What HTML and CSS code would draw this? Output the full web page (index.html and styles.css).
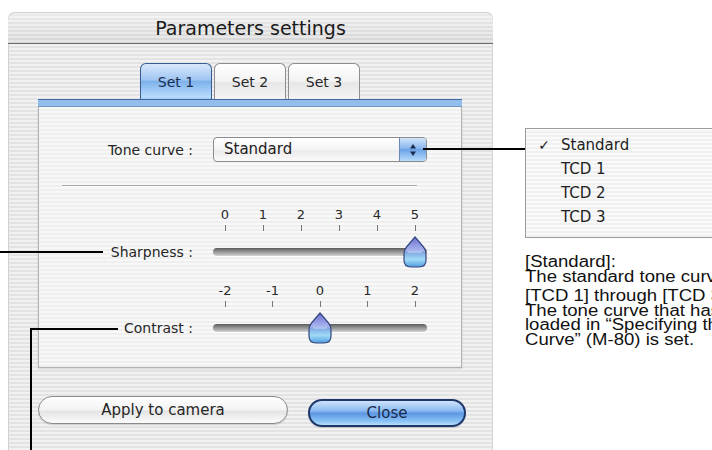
FILE: index.html
```html
<!DOCTYPE html>
<html lang="en">
  <head>
    <meta charset="UTF-8" />
    <title>Parameters settings</title>
    <link rel="stylesheet" href="styles.css">
  </head>
  <body>
    <div class="page">
      <div class="window">
        <div class="titlebar">Parameters settings</div>
        <div class="window-body">
          <div class="tabs">
            <div class="tab tab-active">Set 1</div>
            <div class="tab">Set 2</div>
            <div class="tab">Set 3</div>
          </div>
          <div class="tab-strip"></div>
          <div class="panel">
            <div class="row-tone">
              <span class="label">Tone curve :</span>
              <div class="popup">
                <span class="popup-text">Standard</span>
                <span class="popup-arrows">
                  <svg width="10" height="16" viewBox="0 0 10 16">
                    <path d="M5 2 L8 6.5 H2 Z" fill="#1c2c50" />
                    <path d="M5 14 L8 9.5 H2 Z" fill="#1c2c50" />
                  </svg>
                </span>
              </div>
            </div>
            <div class="separator"></div>

            <div class="slider-row">
              <span class="label slider-label">Sharpness :</span>
              <div class="scale">
                <span>0</span><span>1</span><span>2</span><span>3</span><span>4</span><span>5</span>
              </div>
              <div class="ticks">
                <i></i><i></i><i></i><i></i><i></i><i></i>
              </div>
              <div class="track-wrap">
                <div class="track"></div>
                <svg class="thumb thumb-max" width="24" height="32" viewBox="0 0 24 32">
                  <defs>
                    <linearGradient id="drop1" x1="0" y1="0" x2="0" y2="1">
                      <stop offset="0" stop-color="#6f6fd0" />
                      <stop offset="0.45" stop-color="#a9b4ee" />
                      <stop offset="0.5" stop-color="#7fa6e0" />
                      <stop offset="0.75" stop-color="#9fdaf6" />
                      <stop offset="1" stop-color="#4f9de0" />
                    </linearGradient>
                  </defs>
                  <path d="M12 1 L20.5 11 Q23 14 23 18 V24 Q23 31 16 31 H8 Q1 31 1 24 V18 Q1 14 3.5 11 Z" fill="url(#drop1)" stroke="#34477e" stroke-width="1.2" />
                  <path d="M5 16 H19" stroke="#dfe8ff" stroke-width="1" opacity="0.8" />
                </svg>
              </div>
            </div>

            <div class="slider-row slider-row-second">
              <span class="label slider-label">Contrast :</span>
              <div class="scale">
                <span>-2</span><span>-1</span><span>0</span><span>1</span><span>2</span>
              </div>
              <div class="ticks">
                <i></i><i></i><i></i><i></i><i></i>
              </div>
              <div class="track-wrap">
                <div class="track"></div>
                <svg class="thumb thumb-mid" width="24" height="32" viewBox="0 0 24 32">
                  <path d="M12 1 L20.5 11 Q23 14 23 18 V24 Q23 31 16 31 H8 Q1 31 1 24 V18 Q1 14 3.5 11 Z" fill="url(#drop1)" stroke="#34477e" stroke-width="1.2" />
                  <path d="M5 16 H19" stroke="#dfe8ff" stroke-width="1" opacity="0.8" />
                </svg>
              </div>
            </div>
          </div>

          <div class="buttons">
            <button class="btn">Apply to camera</button>
            <button class="btn btn-default">Close</button>
          </div>
        </div>
      </div>

      <div class="side">
        <div class="menu">
          <div class="menu-item"><span class="check">&#10003;</span>Standard</div>
          <div class="menu-item"><span class="check"></span>TCD 1</div>
          <div class="menu-item"><span class="check"></span>TCD 2</div>
          <div class="menu-item"><span class="check"></span>TCD 3</div>
        </div>
        <div class="notes">
          <p>[Standard]:<br>The standard tone curve is set.</p>
          <p>[TCD 1] through [TCD 3]:<br>The tone curve that has been<br>loaded in “Specifying the Tone<br>Curve” (M-80) is set.</p>
        </div>
      </div>

      <!-- callout lines -->
      <div class="callout callout-tone"></div>
      <div class="callout callout-sharp"></div>
      <div class="callout callout-contrast-h"></div>
      <div class="callout callout-contrast-v"></div>
    </div>
  </body>
</html>
```

FILE: styles.css
```css
body {
  margin: 0;
  padding: 0;
  background: #fff;
  font-family: "DejaVu Sans", "Open Sans", sans-serif;
  color: #222;
}

.page {
  position: relative;
  width: 712px;
  height: 450px;
  overflow: hidden;
  display: flex;
  align-items: flex-start;
}

/* window */

.window {
  margin: 12px 0 0 8px;
  width: 485px;
  height: 460px;
  flex-shrink: 0;
  border-radius: 7px 7px 0 0;
  background: repeating-linear-gradient(to bottom, #f1f1f1 0, #f1f1f1 2px, #e3e3e3 2px, #e3e3e3 4px);
  box-shadow: inset 1px 0 0 #d2d2d2, inset -1px 0 0 #d2d2d2;
}

.titlebar {
  height: 31px;
  border-bottom: 1px solid #6c6c6c;
  border-radius: 7px 7px 0 0;
  display: flex;
  align-items: center;
  justify-content: center;
  font-size: 19px;
  color: #1a1a1a;
  background:
    linear-gradient(to bottom, rgba(255, 255, 255, 0.4), rgba(0, 0, 0, 0.04)),
    repeating-linear-gradient(to bottom, #eeeeee 0, #eeeeee 2px, #dedede 2px, #dedede 4px);
  box-shadow: inset 0 1px 0 #cfcfcf;
}

.window-body {
  padding: 19px 0 0 30px;
}

/* tabs */

.tabs {
  width: 424px;
  display: flex;
  justify-content: center;
  gap: 2px;
  height: 36px;
}

.tab {
  width: 72px;
  box-sizing: border-box;
  border: 1px solid #8e8e8e;
  border-bottom: none;
  border-radius: 6px 6px 0 0;
  font-size: 14px;
  text-align: center;
  padding-top: 10px;
  color: #262626;
  background: linear-gradient(to bottom, #ffffff, #f2f2f2 50%, #e6e6e6 52%, #f4f4f4);
}

.tab-active {
  border-color: #3a5b92;
  color: #1b2d4e;
  background: linear-gradient(to bottom, #d9e8fb, #9fc6f1 45%, #7eb2ec 50%, #b9dcfd 95%, #9ec9f5);
}

.tab-strip {
  width: 424px;
  height: 6px;
  background: #93bdeb;
  border-top: 1px solid #3f6aa4;
  border-bottom: 1px solid #7297c6;
}

.panel {
  width: 424px;
  height: 261px;
  box-sizing: border-box;
  border-left: 1px solid #b3b3b3;
  border-right: 1px solid #b3b3b3;
  border-bottom: 1px solid #b0b0b0;
  box-shadow: 0 1px 2px rgba(0, 0, 0, 0.12);
  background: repeating-linear-gradient(to bottom, #f8f8f8 0, #f8f8f8 2px, #efefef 2px, #efefef 4px);
  padding-top: 30px;
}

.label {
  width: 154px;
  text-align: right;
  font-size: 14px;
  color: #262626;
}

.row-tone {
  display: flex;
  align-items: center;
  gap: 20px;
}

.popup {
  width: 214px;
  height: 25px;
  box-sizing: border-box;
  border: 1px solid #8c8c8c;
  border-radius: 4px;
  display: flex;
  align-items: stretch;
  background: linear-gradient(to bottom, #ffffff, #f4f4f4 50%, #ebebeb 55%, #fafafa);
  overflow: hidden;
}

.popup-text {
  flex: 1;
  font-size: 15px;
  padding-left: 10px;
  line-height: 23px;
  color: #202020;
}

.popup-arrows {
  width: 26px;
  border-left: 1px solid #6c88b6;
  display: flex;
  align-items: center;
  justify-content: center;
  background: linear-gradient(to bottom, #d1e4fb, #8ab7ee 45%, #6aa2e6 50%, #b8dbfc);
}

.separator {
  margin: 23px 0 0 23px;
  width: 355px;
  height: 1px;
  background: #a9a9a9;
  border-bottom: 1px solid #fdfdfd;
}

/* sliders */

.slider-row {
  display: grid;
  grid-template-columns: 154px 214px;
  grid-template-rows: 16px 9px 40px;
  column-gap: 20px;
  margin-top: 20px;
}

.slider-row-second {
  margin-top: 11px;
}

.slider-label {
  grid-column: 1;
  grid-row: 3;
  align-self: center;
}

.scale,
.ticks {
  grid-column: 2;
  display: flex;
  justify-content: space-between;
}

.scale {
  grid-row: 1;
}

.scale span {
  width: 24px;
  text-align: center;
  font-size: 13px;
  line-height: 16px;
  color: #2a2a2a;
}

.ticks {
  grid-row: 2;
}

.ticks i {
  width: 24px;
  height: 9px;
  background: linear-gradient(#777, #777) center 2px / 1px 6px no-repeat;
}

.track-wrap {
  grid-column: 2;
  grid-row: 3;
  position: relative;
  display: flex;
  align-items: center;
}

.track {
  width: 100%;
  height: 8px;
  border-radius: 4px;
  background: linear-gradient(to bottom, #5b5b5b, #8d8d8d 40%, #b9b9b9 80%, #d6d6d6);
  box-shadow: 0 1px 0 #fff;
}

.thumb {
  position: absolute;
  top: 4px;
}

.thumb-max {
  left: 190px;
}

.thumb-mid {
  left: 95px;
}

/* buttons */

.buttons {
  width: 430px;
  display: flex;
  gap: 20px;
  margin-top: 28px;
}

.btn {
  width: 250px;
  height: 28px;
  border: 1px solid #8a8a8a;
  border-radius: 14px;
  font-family: "DejaVu Sans", sans-serif;
  font-size: 15px;
  color: #262626;
  background: linear-gradient(to bottom, #ffffff, #f3f3f3 50%, #e4e4e4 54%, #fbfbfb);
  box-shadow: 0 1px 1px rgba(0, 0, 0, 0.15);
  padding: 0;
}

.btn-default {
  width: 158px;
  margin-top: 3px;
  border: 2px solid #1e3769;
  color: #1a2b4c;
  background: linear-gradient(to bottom, #cfe3fb, #8cbaf0 40%, #5c98e4 52%, #8cc4f6 85%, #b6defd);
}

/* right side */

.side {
  margin-left: 32px;
  padding-top: 128px;
  flex-shrink: 0;
  width: 220px;
}

.menu {
  height: 110px;
  box-sizing: border-box;
  border: 1px solid #9d9d9d;
  border-right: none;
  padding-top: 4px;
  background: repeating-linear-gradient(to bottom, #fafafa 0, #fafafa 2px, #f0f0f0 2px, #f0f0f0 4px);
}

.menu-item {
  display: flex;
  align-items: center;
  height: 24px;
  font-size: 15px;
  color: #1e1e1e;
}

.check {
  width: 34px;
  text-align: center;
  font-size: 14px;
  padding-left: 1px;
}

.notes {
  margin-top: 17px;
  font-family: "Liberation Sans", Arial, sans-serif;
  font-size: 16px;
  line-height: 14.5px;
  color: #111;
  white-space: nowrap;
  transform: scaleX(1.16);
  transform-origin: left top;
}

.notes p {
  margin: 0 0 5px 0;
}

/* callout lines */

.callout {
  position: absolute;
  background: #000;
}

.callout-tone {
  left: 423px;
  top: 148px;
  width: 102px;
  height: 2px;
}

.callout-sharp {
  left: 0;
  top: 251px;
  width: 103px;
  height: 2px;
}

.callout-contrast-h {
  left: 30px;
  top: 328px;
  width: 88px;
  height: 2px;
}

.callout-contrast-v {
  left: 30px;
  top: 328px;
  width: 2px;
  height: 122px;
}
```
